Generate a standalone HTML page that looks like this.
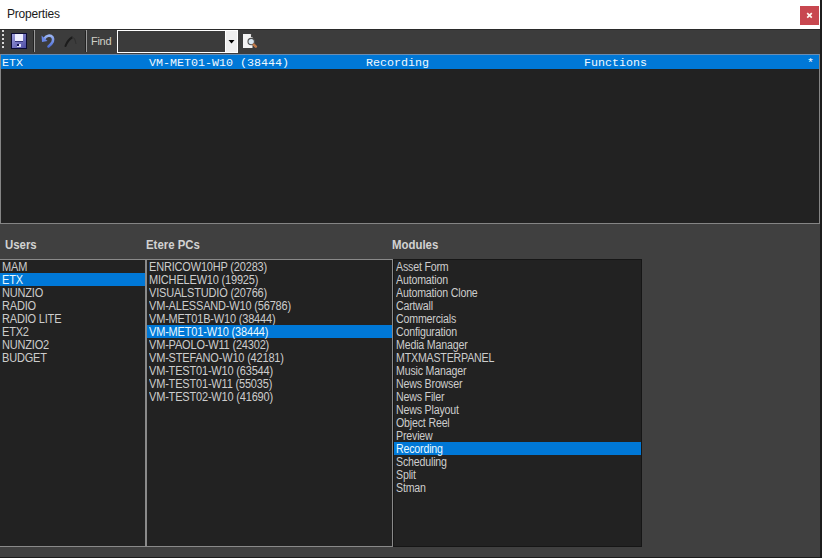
<!DOCTYPE html>
<html><head><meta charset="utf-8">
<style>
*{margin:0;padding:0;box-sizing:border-box}
html,body{width:822px;height:558px;overflow:hidden;background:#1c1c1c;font-family:"Liberation Sans",sans-serif}
.abs{position:absolute}
#title{left:0;top:0;width:820px;height:29px;background:#fff}
#title .t{left:7px;top:7px;font-size:12px;color:#1a1a1a;letter-spacing:-0.2px}
#close{left:800px;top:6px;width:19px;height:19px;background:#c8474f}
#tb{left:0;top:29px;width:820px;height:25px;background:#3c3c3c;border-top:1px solid #2a2a2a}
.dot{width:2px;height:2px;background:#d8d8d8}
.sep{width:1px;height:22px;background:#9a9a9a}
#find{left:91px;top:35px;font-size:11px;color:#d0d0c8;letter-spacing:-0.3px}
#combo{left:117px;top:30px;width:121px;height:23px;border:1px solid #fff;background:#3b3b3b}
#combo .btn{left:107px;top:0;width:12px;height:21px;background:#eeeeee;border-left:1px solid #fff}
#lv{left:0;top:54px;width:820px;height:170px;background:#222;border:1px solid #858585;border-top-color:#6a8db2}
#lv .sel{left:0;top:0;width:818px;height:14px;background:#0078d7}
.mono{font-family:"Liberation Mono",monospace;font-size:11.67px;color:#eef8ff;top:1px;white-space:pre}
#panel{left:0;top:224px;width:820px;height:333px;background:#404040}
.lbl{font-weight:bold;font-size:12px;color:#d2d2d2;top:14px;transform:scaleX(0.95);transform-origin:0 0}
.list{background:#222;font-size:11px;color:#cdcdcd}
.list div.r{position:absolute;left:0;height:13px;line-height:13px;white-space:pre;width:100%}
#lu{left:0;top:259px;width:146px;height:288px;border:1px solid #8a8a8a;border-left:none}
#lp{left:146px;top:259px;width:247px;height:288px;border:1px solid #8a8a8a}
#lm{left:393px;top:259px;width:249px;height:288px;border:1px solid #161616}
.list span{position:absolute;top:1px;letter-spacing:-0.2px;font-size:12px;transform:scaleX(0.917);transform-origin:0 0}
#lm span{transform:scaleX(0.885)}
.list div.s{background:#0078d7;color:#e8f8ff}
</style></head><body>
<div id="title" class="abs"><div class="t abs">Properties</div></div>
<div id="close" class="abs"></div>
<div id="tb" class="abs"></div>
<div class="abs dot" style="left:2px;top:30px"></div>
<div class="abs dot" style="left:2px;top:34px"></div>
<div class="abs dot" style="left:2px;top:38px"></div>
<div class="abs dot" style="left:2px;top:42px"></div>
<div class="abs dot" style="left:2px;top:46px"></div>
<div class="abs sep" style="left:34px;top:30px"></div>
<div class="abs sep" style="left:86px;top:30px"></div>
<div class="abs" style="left:33px;top:31px;width:1px;height:21px;background:#222"></div>
<div class="abs" style="left:85px;top:31px;width:1px;height:21px;background:#222"></div>
<div id="find" class="abs">Find</div>
<div id="combo" class="abs"><div class="btn abs"></div></div>
<div id="lv" class="abs">
  <div class="sel abs"></div>
  <div class="abs mono" style="left:1px">ETX</div>
  <div class="abs mono" style="left:148px">VM-MET01-W10 (38444)</div>
  <div class="abs mono" style="left:365px">Recording</div>
  <div class="abs mono" style="left:583px">Functions</div>
  <div class="abs mono" style="left:806px">*</div>
</div>
<div id="panel" class="abs">
  <div class="abs lbl" style="left:5px">Users</div>
  <div class="abs lbl" style="left:146px">Etere PCs</div>
  <div class="abs lbl" style="left:392px">Modules</div>
</div>
<div id="lu" class="abs list">
<div class="r" style="top:0px"><span style="left:2px">MAM</span></div>
<div class="r s" style="top:13px"><span style="left:2px">ETX</span></div>
<div class="r" style="top:26px"><span style="left:2px">NUNZIO</span></div>
<div class="r" style="top:39px"><span style="left:2px">RADIO</span></div>
<div class="r" style="top:52px"><span style="left:2px">RADIO LITE</span></div>
<div class="r" style="top:65px"><span style="left:2px">ETX2</span></div>
<div class="r" style="top:78px"><span style="left:2px">NUNZIO2</span></div>
<div class="r" style="top:91px"><span style="left:2px">BUDGET</span></div>
</div>
<div id="lp" class="abs list">
<div class="r" style="top:0px"><span style="left:2px">ENRICOW10HP (20283)</span></div>
<div class="r" style="top:13px"><span style="left:2px">MICHELEW10 (19925)</span></div>
<div class="r" style="top:26px"><span style="left:2px">VISUALSTUDIO (20766)</span></div>
<div class="r" style="top:39px"><span style="left:2px">VM-ALESSAND-W10 (56786)</span></div>
<div class="r" style="top:52px"><span style="left:2px">VM-MET01B-W10 (38444)</span></div>
<div class="r s" style="top:65px"><span style="left:2px">VM-MET01-W10 (38444)</span></div>
<div class="r" style="top:78px"><span style="left:2px">VM-PAOLO-W11 (24302)</span></div>
<div class="r" style="top:91px"><span style="left:2px">VM-STEFANO-W10 (42181)</span></div>
<div class="r" style="top:104px"><span style="left:2px">VM-TEST01-W10 (63544)</span></div>
<div class="r" style="top:117px"><span style="left:2px">VM-TEST01-W11 (55035)</span></div>
<div class="r" style="top:130px"><span style="left:2px">VM-TEST02-W10 (41690)</span></div>
</div>
<div id="lm" class="abs list">
<div class="r" style="top:0px"><span style="left:2px">Asset Form</span></div>
<div class="r" style="top:13px"><span style="left:2px">Automation</span></div>
<div class="r" style="top:26px"><span style="left:2px">Automation Clone</span></div>
<div class="r" style="top:39px"><span style="left:2px">Cartwall</span></div>
<div class="r" style="top:52px"><span style="left:2px">Commercials</span></div>
<div class="r" style="top:65px"><span style="left:2px">Configuration</span></div>
<div class="r" style="top:78px"><span style="left:2px">Media Manager</span></div>
<div class="r" style="top:91px"><span style="left:2px">MTXMASTERPANEL</span></div>
<div class="r" style="top:104px"><span style="left:2px">Music Manager</span></div>
<div class="r" style="top:117px"><span style="left:2px">News Browser</span></div>
<div class="r" style="top:130px"><span style="left:2px">News Filer</span></div>
<div class="r" style="top:143px"><span style="left:2px">News Playout</span></div>
<div class="r" style="top:156px"><span style="left:2px">Object Reel</span></div>
<div class="r" style="top:169px"><span style="left:2px">Preview</span></div>
<div class="r s" style="top:182px"><span style="left:2px">Recording</span></div>
<div class="r" style="top:195px"><span style="left:2px">Scheduling</span></div>
<div class="r" style="top:208px"><span style="left:2px">Split</span></div>
<div class="r" style="top:221px"><span style="left:2px">Stman</span></div>
</div>

<svg class="abs" style="left:0;top:0" width="822" height="558">
<defs>
<linearGradient id="fg" x1="0" y1="0" x2="1" y2="1"><stop offset="0" stop-color="#a0a0e0"/><stop offset="1" stop-color="#4a4aa0"/></linearGradient>
<linearGradient id="ug" x1="0" y1="0" x2="0" y2="1"><stop offset="0" stop-color="#9ab4f4"/><stop offset="1" stop-color="#5070d8"/></linearGradient>
</defs>
<!-- save -->
<rect x="11.5" y="33.5" width="15" height="15" fill="url(#fg)" stroke="#0c0c34"/>
<rect x="15" y="34" width="8" height="7" fill="#eeeeff"/>
<rect x="15" y="41" width="8" height="1" fill="#34347a"/>
<rect x="17" y="44" width="2" height="2" fill="#141450"/>
<rect x="19" y="44" width="2" height="3" fill="#e4e4f8"/>
<rect x="17" y="46" width="4" height="1" fill="#d8d8f0"/>
<!-- undo -->
<path d="M44.5 38.5 C46 35.5,50.5 34.5,52.5 37.2 C54 40,52.5 43.5,48.5 46.5" fill="none" stroke="url(#ug)" stroke-width="2.6" stroke-linecap="round"/>
<path d="M41.5 35.5 L42 42 L47.5 41 Z" fill="#6a88e8"/>
<!-- redo disabled -->
<path d="M65.5 46 C67 42,70 38.5,72 37.5" fill="none" stroke="#1c1c1c" stroke-width="2.1" stroke-linecap="round"/>
<path d="M72 37.5 C74 37,75.5 40,76 44" fill="none" stroke="#303030" stroke-width="1.1"/>
<!-- combo arrow -->
<path d="M228.5 40 L234.5 40 L231.5 43.5 Z" fill="#000"/>
<!-- search -->
<path d="M243 34 L250.5 34 L252.5 36 L252.5 48 L243 48 Z" fill="#f4f4f4"/>
<circle cx="252" cy="36" r="1.2" fill="#404040"/>
<circle cx="251.2" cy="41.6" r="3.2" fill="#d8e6f0" stroke="#505050" stroke-width="1.1"/>
<path d="M253.8 44.6 L255.8 46.6" stroke="#c07a4a" stroke-width="2.6" stroke-linecap="round"/>
<!-- close x -->
<path d="M807.2 13.2 L811.8 17.6 M811.8 13.2 L807.2 17.6" stroke="#fff8f0" stroke-width="1.7"/>
</svg>

</body></html>
